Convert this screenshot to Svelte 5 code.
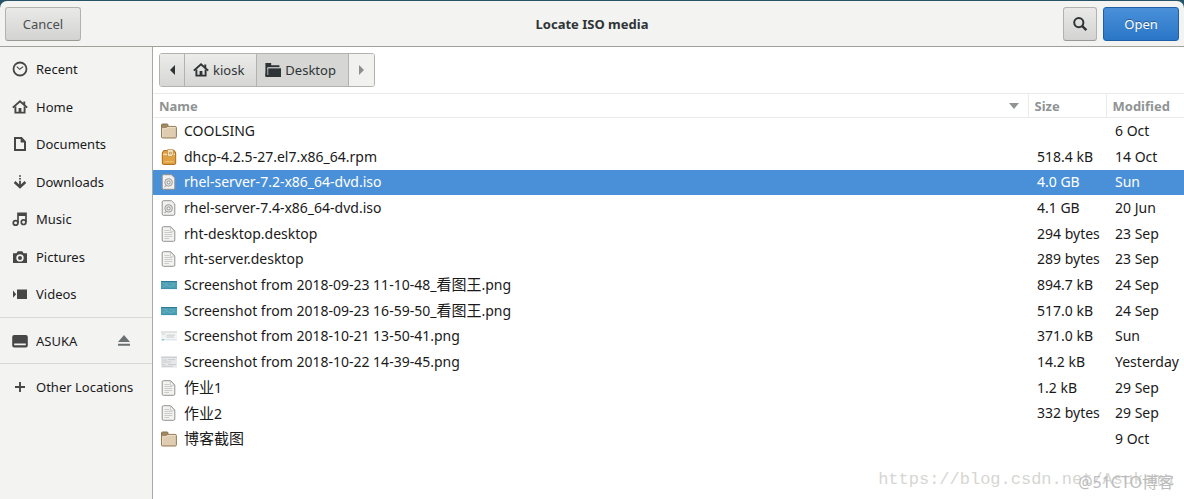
<script lang="ts">
  type Kind = 'folder' | 'package' | 'disc' | 'text' | 'teal' | 'page' | 'pagegrey';

  interface FileRow {
    kind: Kind;
    name: string;
    size: string;
    modified: string;
  }

  const places = [
    { icon: 'recent', label: 'Recent' },
    { icon: 'home', label: 'Home' },
    { icon: 'documents', label: 'Documents' },
    { icon: 'downloads', label: 'Downloads' },
    { icon: 'music', label: 'Music' },
    { icon: 'pictures', label: 'Pictures' },
    { icon: 'videos', label: 'Videos' },
  ];

  const files: FileRow[] = [
    { kind: 'folder', name: 'COOLSING', size: '', modified: '6 Oct' },
    { kind: 'package', name: 'dhcp-4.2.5-27.el7.x86_64.rpm', size: '518.4 kB', modified: '14 Oct' },
    { kind: 'disc', name: 'rhel-server-7.2-x86_64-dvd.iso', size: '4.0 GB', modified: 'Sun' },
    { kind: 'disc', name: 'rhel-server-7.4-x86_64-dvd.iso', size: '4.1 GB', modified: '20 Jun' },
    { kind: 'text', name: 'rht-desktop.desktop', size: '294 bytes', modified: '23 Sep' },
    { kind: 'text', name: 'rht-server.desktop', size: '289 bytes', modified: '23 Sep' },
    { kind: 'teal', name: 'Screenshot from 2018-09-23 11-10-48_看图王.png', size: '894.7 kB', modified: '24 Sep' },
    { kind: 'teal', name: 'Screenshot from 2018-09-23 16-59-50_看图王.png', size: '517.0 kB', modified: '24 Sep' },
    { kind: 'page', name: 'Screenshot from 2018-10-21 13-50-41.png', size: '371.0 kB', modified: 'Sun' },
    { kind: 'pagegrey', name: 'Screenshot from 2018-10-22 14-39-45.png', size: '14.2 kB', modified: 'Yesterday' },
    { kind: 'text', name: '作业1', size: '1.2 kB', modified: '29 Sep' },
    { kind: 'text', name: '作业2', size: '332 bytes', modified: '29 Sep' },
    { kind: 'folder', name: '博客截图', size: '', modified: '9 Oct' },
  ];

  let selected = $state('rhel-server-7.2-x86_64-dvd.iso');

  // Han runs are set a little larger than the Latin text around them.
  function runs(name: string): string[] {
    return name.split(/([\u4e00-\u9fff]+)/).filter((part) => part !== '');
  }

  function isHan(part: string): boolean {
    return /^[\u4e00-\u9fff]/.test(part);
  }
</script>

{#snippet symbol(name: string)}
  <svg class="symbol" viewBox="0 0 16 16" aria-hidden="true">
    {#if name === 'recent'}
      <circle cx="8" cy="8" r="6.5" fill="none" stroke="currentColor" stroke-width="1.8" />
      <path d="M4.8 5.6 7.7 8.3 11.2 5.6" fill="none" stroke="currentColor" stroke-width="1.1" />
    {:else if name === 'home'}
      <path d="M0.8 8.6 8 2.2 15.2 8.6" fill="none" stroke="currentColor" stroke-width="1.9" />
      <path d="M3.4 7.5V13.6H12.6V7.5" fill="none" stroke="currentColor" stroke-width="1.9" />
      <path d="M6.6 13.5V9H9.4V13.5ZM11.3 2.5H13.2V6H11.3Z" fill="currentColor" />
    {:else if name === 'documents'}
      <path d="M3 2H9.4L13 5.8V14H3Z" fill="none" stroke="currentColor" stroke-width="2" />
      <path d="M8.6 1.6V6.6H13.4Z" fill="currentColor" />
    {:else if name === 'downloads'}
      <path d="M7.1 1.2H8.9V2.8H7.1ZM7.1 4H8.9V5.6H7.1ZM7.1 6.8H8.9V12H7.1Z" fill="currentColor" />
      <path d="M2.6 8 8 13 13.4 8" fill="none" stroke="currentColor" stroke-width="2.4" />
    {:else if name === 'music'}
      <path d="M6 12V2.4H14V11M6 4.2H14" fill="none" stroke="currentColor" stroke-width="1.7" />
      <circle cx="3.6" cy="11.9" r="2.3" fill="none" stroke="currentColor" stroke-width="1.7" />
      <circle cx="11.6" cy="11.2" r="2.3" fill="none" stroke="currentColor" stroke-width="1.7" />
    {:else if name === 'pictures'}
      <path
        fill-rule="evenodd"
        d="M1 4.2H4.4L5.8 2.2H10.2L11.6 4.2H15V14H1ZM8 5.2A3.7 3.7 0 1 0 8 12.6 3.7 3.7 0 1 0 8 5.2Z"
        fill="currentColor"
      />
      <circle cx="8" cy="8.9" r="2" fill="currentColor" />
    {:else if name === 'videos'}
      <path d="M5 3.5H15V13H5Z" fill="currentColor" />
      <path d="M1 4.6 4.2 8.2 1 11.8Z" fill="currentColor" />
    {:else if name === 'drive'}
      <path
        fill-rule="evenodd"
        d="M2.2 2H13.8Q15.8 2 15.8 4V12.5Q15.8 14.5 13.8 14.5H2.2Q0.2 14.5 0.2 12.5V4Q0.2 2 2.2 2ZM2.2 10.4V12.3H13.8V10.4Z"
        fill="currentColor"
      />
    {:else if name === 'plus'}
      <path d="M8 3V13M3 8H13" fill="none" stroke="currentColor" stroke-width="1.9" />
    {:else if name === 'eject'}
      <path d="M8 2 14 9H2ZM2 10.8H14V12.8H2Z" fill="currentColor" />
    {:else if name === 'search'}
      <circle cx="6.8" cy="6.6" r="4.6" fill="none" stroke="currentColor" stroke-width="2" />
      <path d="M10 9.8 14.4 14.2" fill="none" stroke="currentColor" stroke-width="2.4" />
    {:else if name === 'folder'}
      <path d="M0.4 1H6.2V3.2H14.4V5.4H2.6V14H0.4Z" fill="currentColor" />
      <path d="M3.2 6.2H16V15H0.4V12Z" fill="currentColor" />
      <path d="M2.8 13V5.7H14.6" fill="none" stroke="#d6d6d4" stroke-width="0.8" />
    {/if}
  </svg>
{/snippet}

{#snippet fileIcon(kind: Kind)}
  <svg class="file-icon" viewBox="0 0 16 16" aria-hidden="true">
    {#if kind === 'folder'}
      <path d="M0.5 14.2V2Q0.5 1 1.5 1H6Q7 1 7 2V4H0.5Z" fill="#a38a63" stroke="#8a7350" />
      <rect x="0.6" y="3.4" width="14.8" height="11.6" rx="1.2" fill="#dfccb1" stroke="#93794f" />
      <path d="M1 3H6.6L5.4 5H1Z" fill="#a08a66" />
      <path d="M1.6 14V5.8H5.6L6.8 4.4H14.4" fill="none" stroke="#efe3d0" stroke-width="0.8" />
    {:else if kind === 'package'}
      <path d="M1.3 4 2.6 1.6H13.4L14.7 4V14.2Q14.7 15.4 13.5 15.4H2.5Q1.3 15.4 1.3 14.2Z" fill="#e0a143" stroke="#a96b17" />
      <path d="M2 5.4H14" stroke="#f8dca4" stroke-width="1.4" />
      <path d="M6.6 0.6H12.2V5.6L10.4 7.4H6.6Z" fill="#f6ead0" stroke="#c08a3c" stroke-width="0.8" />
      <path d="M8.4 5V3.2H10.4V5Z" fill="none" stroke="#c08a3c" stroke-width="0.8" />
      <path d="M3.4 12.8H12.6" stroke="#f2c67e" />
    {:else if kind === 'disc'}
      <path d="M2.4 0.7H10.4L13.8 4V14Q13.8 15.3 12.6 15.3H2.4Q1.2 15.3 1.2 14V2Q1.2 0.7 2.4 0.7Z" fill="#f0f0ee" stroke="#92938f" />
      <circle cx="7.6" cy="8.4" r="3.8" fill="#dededc" stroke="#a0a19e" />
      <circle cx="7.6" cy="8.4" r="1.5" fill="#f6f6f5" stroke="#8f908d" stroke-width="0.9" />
      <path d="M3.4 12.8 5.6 11.6" stroke="#979895" />
    {:else if kind === 'text'}
      <path d="M2.4 0.7H9.6L13.8 5V14Q13.8 15.3 12.6 15.3H2.4Q1.2 15.3 1.2 14V2Q1.2 0.7 2.4 0.7Z" fill="#f3f3f1" stroke="#92938f" />
      <path d="M9.4 1.2V5.2H13.4Z" fill="#fff" stroke="#b4b5b1" stroke-width="0.7" />
      <path d="M3.4 4.5H8.4M3.4 6.5H11.4M3.4 8.5H11.4M3.4 10.5H11.4M3.4 12.5H8" stroke="#cbccc8" />
    {:else if kind === 'teal'}
      <rect x="0" y="4" width="16" height="8" fill="#4c9fb2" />
      <path d="M0 4.5H16" stroke="#2f7c92" />
      <path d="M2 6.8H7M9 6.8H14M2 9.6 6 8.4 10 9.6 14 8" fill="none" stroke="#6ab3c3" stroke-width="0.8" />
      <path d="M0 11.6H16" stroke="#3a8ea4" stroke-width="0.8" />
    {:else if kind === 'page'}
      <rect x="0" y="3.4" width="16" height="9" fill="#f2f3f3" />
      <path d="M0 4H16" stroke="#cfd1d1" />
      <path d="M5.5 7.2H14M5.5 9H13M1 6H4" stroke="#c9cbcb" stroke-width="0.9" />
      <path d="M0 11.8H16" stroke="#d9e4ea" />
      <path d="M1 11.8H3" stroke="#74b3cf" />
    {:else}
      <rect x="0" y="2.6" width="16" height="11" fill="#e5e7e9" />
      <path d="M0 3.2H16" stroke="#c2c5c7" />
      <path d="M1 6H6M7 5.6H14M1 8H10M7 10.5H15M1 10.6H4M1 12.4H12" stroke="#c6cacd" stroke-width="0.9" />
    {/if}
  </svg>
{/snippet}

<div class="dialog">
  <header class="headerbar">
    <button type="button" class="button">Cancel</button>
    <h1>Locate ISO media</h1>
    <div class="actions">
      <button type="button" class="button icon-only" aria-label="Search">
        {@render symbol('search')}
      </button>
      <button type="button" class="button suggested">Open</button>
    </div>
  </header>

  <div class="content">
    <nav class="sidebar" aria-label="Places">
      <ul>
        {#each places as place (place.label)}
          <li>
            <a href="#{place.icon}">{@render symbol(place.icon)}<span>{place.label}</span></a>
          </li>
        {/each}
      </ul>
      <ul>
        <li class="volume">
          <a href="#asuka">{@render symbol('drive')}<span>ASUKA</span></a>
          <button type="button" class="eject" aria-label="Eject">{@render symbol('eject')}</button>
        </li>
      </ul>
      <ul>
        <li>
          <a href="#other">{@render symbol('plus')}<span>Other Locations</span></a>
        </li>
      </ul>
    </nav>

    <main class="browser">
      <div class="pathbar">
        <button type="button" class="arrow" aria-label="Back">
          <svg viewBox="0 0 5 10" aria-hidden="true"><path d="M5 0V10L0 5Z" fill="currentColor" /></svg>
        </button>
        <button type="button">{@render symbol('home')}kiosk</button>
        <button type="button" class="current">{@render symbol('folder')}Desktop</button>
        <button type="button" class="arrow" aria-label="Forward" disabled>
          <svg viewBox="0 0 5 10" aria-hidden="true"><path d="M0 0V10L5 5Z" fill="currentColor" /></svg>
        </button>
      </div>

      <table>
        <thead>
          <tr>
            <th class="name" aria-sort="ascending">
              <button type="button">
                Name
                <svg class="sort" viewBox="0 0 10 6" aria-hidden="true">
                  <path d="M0 0H10L5 6Z" fill="currentColor" />
                </svg>
              </button>
            </th>
            <th class="size"><button type="button">Size</button></th>
            <th class="modified"><button type="button">Modified</button></th>
          </tr>
        </thead>
        <tbody>
          {#each files as file (file.name)}
            <tr class:selected={file.name === selected} onclick={() => (selected = file.name)}>
              <td>
                <div class="file">
                  {@render fileIcon(file.kind)}
                  <span
                    >{#each runs(file.name) as part}<span class:han={isHan(part)}>{part}</span
                      >{/each}</span
                  >
                </div>
              </td>
              <td>{file.size}</td>
              <td>{file.modified}</td>
            </tr>
          {/each}
        </tbody>
      </table>
    </main>
  </div>

  <div class="watermarks">
    <span class="blog">https://blog.csdn.net/Asukama</span>
    <span class="host">@51CTO博客</span>
  </div>
</div>

<style>
  :global(body) {
    background: #285468;
  }

  .dialog {
    position: relative;
    display: flex;
    flex-direction: column;
    min-height: 100vh;
    box-sizing: border-box;
    padding-top: 1px;
    overflow: hidden;
    font-family: 'Noto Sans', 'Noto Sans CJK SC', sans-serif;
    font-size: 13px;
    line-height: 18px;
    color: #1a1a1a;
  }

  button {
    margin: 0;
    font: inherit;
    color: #2e3436;
  }

  .symbol {
    flex: none;
    width: 16px;
    height: 16px;
  }

  .headerbar {
    display: grid;
    grid-template-columns: 1fr auto 1fr;
    align-items: center;
    box-sizing: border-box;
    height: 46px;
    padding: 0 5px;
    border-bottom: 1px solid #a1a19a;
    border-radius: 7px 7px 0 0;
    background: #f3f3f2;
  }

  .headerbar h1 {
    margin: 0;
    font-size: 13px;
    font-weight: 700;
    color: #2e3436;
  }

  .actions {
    display: flex;
    justify-content: flex-end;
    gap: 6px;
  }

  .button {
    justify-self: start;
    display: flex;
    align-items: center;
    justify-content: center;
    box-sizing: border-box;
    width: 76px;
    height: 34px;
    padding: 0;
    border: 1px solid #b3b3ae;
    border-bottom-color: #9a9a94;
    border-radius: 3px;
    background: linear-gradient(#e9e9e8, #d3d3d1);
    color: #4a4f51;
  }

  .button.icon-only {
    width: 34px;
    color: #2e3436;
  }

  .button.suggested {
    border-color: #1f5fa8;
    background: linear-gradient(#4a90d9, #2a76c6);
    color: #fff;
    text-shadow: 0 -1px rgb(0 0 0 / 35%);
  }

  .content {
    flex: 1;
    display: flex;
  }

  .sidebar {
    flex: none;
    box-sizing: border-box;
    width: 153px;
    padding-top: 3px;
    border-right: 1px solid #a9a9a4;
    background: #f3f3f2;
  }

  .sidebar ul {
    margin: 0;
    padding: 0 0 4px;
    list-style: none;
  }

  .sidebar ul + ul {
    padding-top: 4px;
    border-top: 1px solid #d8d8d6;
  }

  .sidebar li {
    display: flex;
    align-items: center;
    height: 38px;
  }

  .sidebar li:nth-child(even),
  .sidebar ul + ul li {
    height: 37px;
  }

  .sidebar a {
    flex: 1;
    display: flex;
    align-items: center;
    gap: 8px;
    padding-left: 12px;
    color: inherit;
    text-decoration: none;
    white-space: nowrap;
  }

  .sidebar .symbol {
    color: #474747;
  }

  .sidebar .eject .symbol {
    color: #6b7071;
  }

  .eject {
    display: flex;
    padding: 0;
    margin-right: 20px;
    border: 0;
    background: none;
  }

  .browser {
    flex: 1;
    min-width: 0;
    background: #fff;
  }

  .pathbar {
    display: flex;
    width: max-content;
    margin: 6px;
    border: 1px solid #b3b3ae;
    border-radius: 3px;
    overflow: hidden;
  }

  .pathbar button {
    display: flex;
    align-items: center;
    gap: 4px;
    height: 32px;
    padding: 0 12px 0 8px;
    border: 0;
    border-right: 1px solid #b3b3ae;
    background: linear-gradient(#ececeb, #d6d6d4);
  }

  .pathbar .current {
    background: #d6d6d4;
  }

  .pathbar .arrow {
    justify-content: center;
    width: 25px;
    padding: 0;
  }

  .pathbar .arrow:disabled {
    border-right: 0;
    background: #f1f1f0;
    color: #8b8e8f;
  }

  .arrow svg {
    width: 5px;
    height: 10px;
  }

  table {
    width: 100%;
    table-layout: fixed;
    border-collapse: collapse;
  }

  th {
    height: 24px;
    box-sizing: border-box;
    padding: 0;
    border-top: 1px solid #ebebea;
    border-bottom: 1px solid #ebebea;
  }

  th + th {
    border-left: 1px solid #ebebea;
  }

  th.size,
  th.modified {
    width: 78px;
  }

  th button {
    display: flex;
    align-items: center;
    justify-content: space-between;
    width: 100%;
    padding: 0 9px 0 6px;
    border: 0;
    background: none;
    font-weight: 700;
    color: #8f9393;
  }

  .sort {
    width: 10px;
    height: 6px;
  }

  tbody tr {
    height: 26px;
  }

  tbody tr:nth-child(3n) {
    height: 25px;
  }

  td {
    padding: 0 0 0 9px;
    font-size: 14px;
    white-space: nowrap;
  }

  td:first-child {
    padding-left: 8px;
  }

  .file {
    display: flex;
    align-items: center;
    gap: 7px;
  }

  .file-icon {
    flex: none;
    width: 16px;
    height: 16px;
  }

  .han {
    font-size: 15px;
  }

  .selected {
    background: #4a90d9;
    color: #fff;
  }

  .watermarks span {
    position: absolute;
    right: 10px;
    bottom: 6px;
    white-space: nowrap;
  }

  .blog {
    font-family: 'Liberation Mono', monospace;
    font-size: 17px;
    line-height: 26px;
    color: #d6d6d2;
  }

  .host {
    font-size: 16px;
    line-height: 22px;
    color: #bcbcbc;
  }
</style>
